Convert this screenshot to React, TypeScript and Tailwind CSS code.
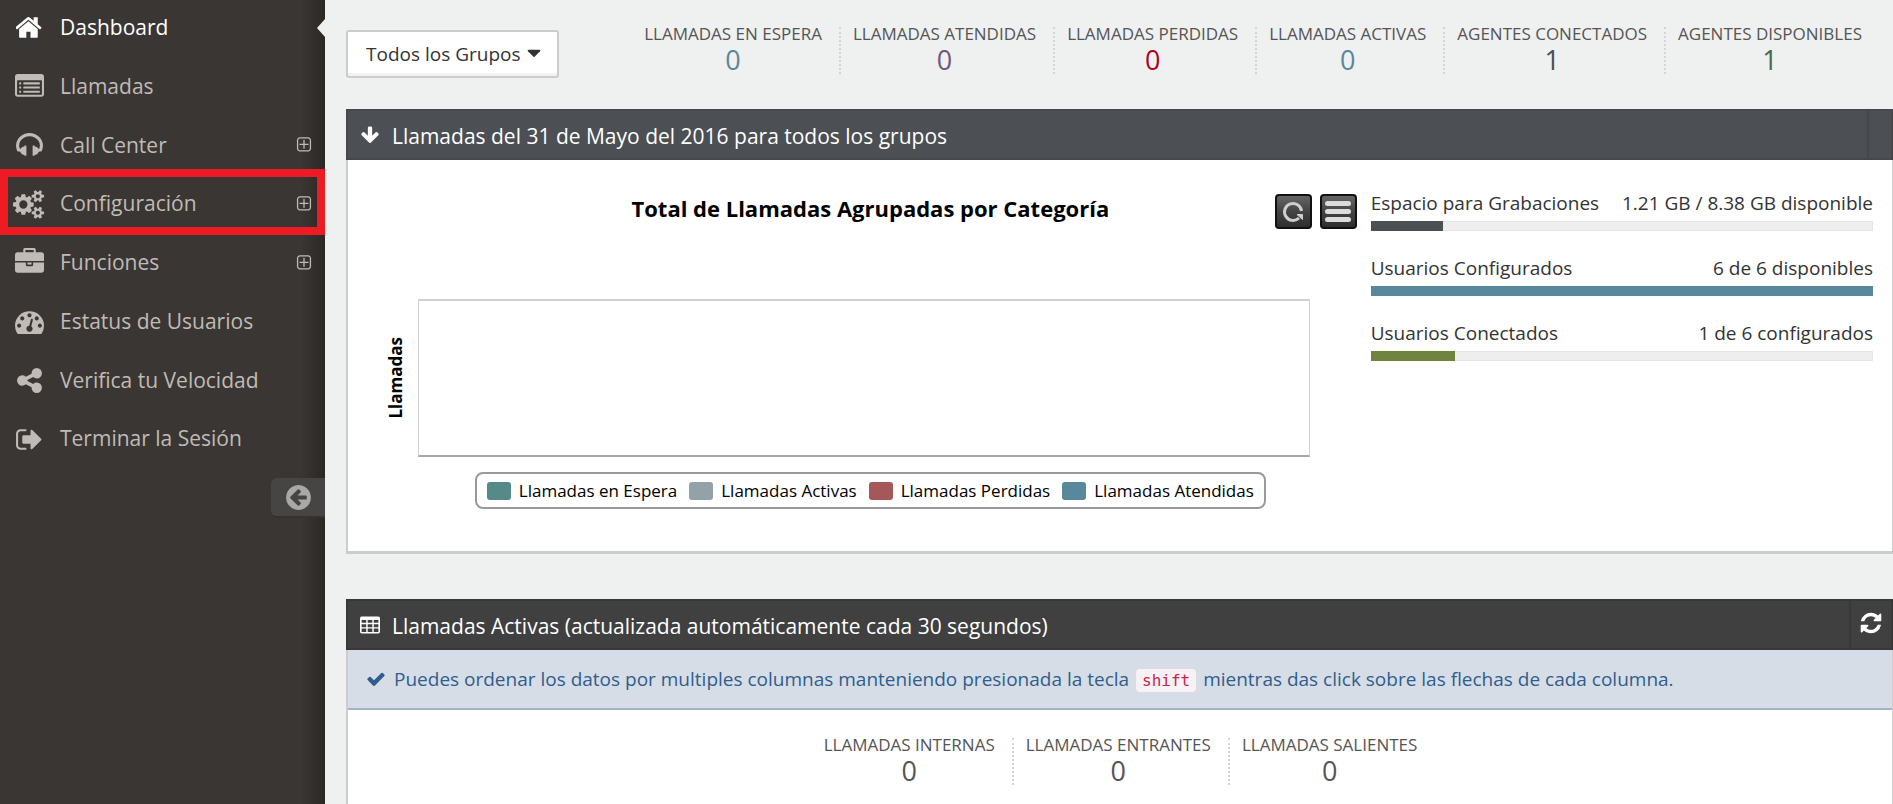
import { useState } from 'react';
import type { ReactNode } from 'react';

interface IconProps {
  d: string;
  className?: string;
  viewBox?: string;
}

interface NavItem {
  label: string;
  icon: string;
  viewBox?: string;
  expandable?: boolean;
  marked?: boolean;
}

interface Stat {
  label: string;
  value: number;
  color: string;
}

const icons = {
  home: 'M1408 992v480q0 26-19 45t-45 19h-384v-384h-256v384h-384q-26 0-45-19t-19-45v-480q0-1 .5-3t.5-3l575-474 575 474q1 2 1 6zm223-69l-62 74q-8 9-21 11h-3q-13 0-21-7l-692-577-692 577q-12 8-24 7-13-2-21-11l-62-74q-8-10-7-23.5t11-21.5l719-599q32-26 76-26t76 26l244 204v-195q0-14 9-23t23-9h192q14 0 23 9t9 23v408l219 182q10 8 11 21.5t-7 23.5z',
  listAlt: 'M384 1184v64q0 13-9.500 22.500t-22.500 9.500h-64q-13 0-22.500-9.500t-9.500-22.500v-64q0-13 9.500-22.500t22.500-9.500h64q13 0 22.500 9.500t9.500 22.500zm0-256v64q0 13-9.500 22.500t-22.500 9.500h-64q-13 0-22.500-9.500t-9.500-22.500v-64q0-13 9.500-22.500t22.500-9.500h64q13 0 22.500 9.500t9.500 22.500zm0-256v64q0 13-9.500 22.500t-22.500 9.500h-64q-13 0-22.500-9.500t-9.500-22.500v-64q0-13 9.500-22.500t22.500-9.500h64q13 0 22.500 9.500t9.500 22.500zm1152 512v64q0 13-9.500 22.500t-22.500 9.500h-960q-13 0-22.500-9.500t-9.500-22.500v-64q0-13 9.500-22.500t22.500-9.500h960q13 0 22.500 9.500t9.500 22.500zm0-256v64q0 13-9.500 22.500t-22.500 9.500h-960q-13 0-22.500-9.500t-9.500-22.500v-64q0-13 9.500-22.500t22.500-9.500h960q13 0 22.500 9.500t9.500 22.500zm0-256v64q0 13-9.500 22.500t-22.500 9.500h-960q-13 0-22.500-9.500t-9.500-22.500v-64q0-13 9.500-22.500t22.500-9.500h960q13 0 22.500 9.500t9.500 22.500zm128 704v-832q0-13-9.500-22.500t-22.500-9.500h-1472q-13 0-22.500 9.500t-9.500 22.500v832q0 13 9.500 22.500t22.500 9.500h1472q13 0 22.500-9.500t9.500-22.500zm128-1088v1088q0 66-47 113t-113 47h-1472q-66 0-113-47t-47-113v-1088q0-66 47-113t113-47h1472q66 0 113 47t47 113z',
  headphones: 'M1728 886q0 166-60 314l-20 49-185 33q-22 83-90.500 136.500t-156.500 53.500v32q0 14-9 23t-23 9h-64q-14 0-23-9t-9-23v-576q0-14 9-23t23-9h64q14 0 23 9t9 23v32q71 0 130 35.500t93 95.500l68-12q29-95 29-193 0-148-88-279t-236.500-209-315.500-78-315.500 78-236.500 209-88 279q0 98 29 193l68 12q34-60 93-95.500t130-35.500v-32q0-14 9-23t23-9h64q14 0 23 9t9 23v576q0 14-9 23t-23 9h-64q-14 0-23-9t-9-23v-32q-88 0-156.500-53.500t-90.500-136.500l-185-33-20-49q-60-148-60-314 0-151 67-291t179-242.500 266-163.500 320-61 320 61 266 163.500 179 242.500 67 291z',
  cogs: 'M896 896q0-106-75-181t-181-75-181 75-75 181 75 181 181 75 181-75 75-181zm768 512q0-52-38-90t-90-38-90 38-38 90q0 53 37.500 90.500t90.500 37.500 90.500-37.500 37.500-90.500zm0-1024q0-52-38-90t-90-38-90 38-38 90q0 53 37.500 90.500t90.500 37.500 90.500-37.500 37.500-90.500zm-384 421v185q0 10-7 19.500t-16 10.500l-155 24q-11 35-32 76 34 48 90 115 7 11 7 20 0 12-7 19-23 30-82.500 89.500t-78.500 59.500q-11 0-21-7l-115-90q-37 19-77 31-11 108-23 155-7 24-30 24h-186q-11 0-20-7.500t-10-17.500l-23-153q-34-10-75-31l-118 89q-7 7-20 7-11 0-21-8-144-133-144-160 0-9 7-19 10-14 41-53t47-61q-23-44-35-82l-152-24q-10-1-17-9.500t-7-19.500v-185q0-10 7-19.500t16-10.500l155-24q11-35 32-76-34-48-90-115-7-11-7-20 0-12 7-20 22-30 82-89t79-59q11 0 21 7l115 90q34-18 77-32 11-108 23-154 7-24 30-24h186q11 0 20 7.500t10 17.500l23 153q34 10 75 31l118-89q8-7 20-7 11 0 21 8 144 133 144 160 0 8-7 19-12 16-42 54t-45 60q23 48 34 82l152 23q10 2 17 10.500t7 19.500zm640 533v140q0 16-149 31-12 27-30 52 51 113 51 138 0 4-4 7-122 71-124 71-8 0-46-47t-52-68q-20 2-30 2t-30-2q-14 21-52 68t-46 47q-2 0-124-71-4-3-4-7 0-25 51-138-18-25-30-52-149-15-149-31v-140q0-16 149-31 13-29 30-52-51-113-51-138 0-4 4-7 4-2 35-20t59-34 30-16q8 0 46 46.500t52 67.500q20-2 30-2t30 2q51-71 92-112l6-2q4 0 124 70 4 3 4 7 0 25-51 138 17 23 30 52 149 15 149 31zm0-1024v140q0 16-149 31-12 27-30 52 51 113 51 138 0 4-4 7-122 71-124 71-8 0-46-47t-52-68q-20 2-30 2t-30-2q-14 21-52 68t-46 47q-2 0-124-71-4-3-4-7 0-25 51-138-18-25-30-52-149-15-149-31v-140q0-16 149-31 13-29 30-52-51-113-51-138 0-4 4-7 4-2 35-20t59-34 30-16q8 0 46 46.500t52 67.500q20-2 30-2t30 2q51-71 92-112l6-2q4 0 124 70 4 3 4 7 0 25-51 138 17 23 30 52 149 15 149 31z',
  briefcase: 'M640 256h512v-128h-512v128zm1152 640v480q0 66-47 113t-113 47h-1472q-66 0-113-47t-47-113v-480h672v160q0 26 19 45t45 19h320q26 0 45-19t19-45v-160h672zm-768 0v128h-256v-128h256zm768-480v384h-1792v-384q0-66 47-113t113-47h352v-160q0-40 28-68t68-28h576q40 0 68 28t28 68v160h352q66 0 113 47t47 113z',
  dashboard: 'M384 1152q0-53-37.500-90.500t-90.500-37.500-90.500 37.500-37.500 90.500 37.500 90.500 90.500 37.500 90.500-37.500 37.500-90.500zm192-448q0-53-37.500-90.500t-90.500-37.500-90.500 37.500-37.500 90.500 37.500 90.500 90.500 37.500 90.500-37.500 37.500-90.500zm428 481l101-382q6-26-7.500-48.500t-38.500-29.500-48 6.500-30 39.500l-101 382q-60 5-107 43.500t-63 98.500q-20 77 20 146t117 89 146-20 89-117q16-60-6-117t-72-91zm660-33q0-53-37.500-90.500t-90.500-37.500-90.500 37.500-37.500 90.500 37.500 90.500 90.500 37.500 90.500-37.500 37.500-90.500zm-640-640q0-53-37.500-90.500t-90.500-37.500-90.500 37.500-37.500 90.500 37.500 90.500 90.500 37.500 90.500-37.500 37.500-90.500zm448 192q0-53-37.500-90.500t-90.500-37.500-90.500 37.500-37.500 90.500 37.500 90.500 90.500 37.500 90.500-37.500 37.500-90.500zm320 448q0 261-141 483-19 29-54 29h-1402q-35 0-54-29-141-221-141-483 0-182 71-348t191-286 286-191 348-71 348 71 286 191 191 286 71 348z',
  share: 'M1344 1024q133 0 226.500 93.500t93.500 226.500-93.500 226.500-226.500 93.500-226.500-93.500-93.500-226.500q0-12 2-34l-360-180q-92 86-218 86-133 0-226.500-93.500t-93.500-226.500 93.500-226.500 226.500-93.500q126 0 218 86l360-180q-2-22-2-34 0-133 93.500-226.500t226.500-93.500 226.500 93.500 93.500 226.500-93.500 226.500-226.500 93.500q-126 0-218-86l-360 180q2 22 2 34t-2 34l360 180q92-86 218-86z',
  signOut: 'M704 1440q0 4 1 20t.5 26.500-3 23.500-10 19.500-20.500 6.500h-320q-119 0-203.500-84.500t-84.500-203.500v-704q0-119 84.500-203.500t203.500-84.500h320q13 0 22.500 9.500t9.500 22.500q0 4 1 20t.5 26.500-3 23.500-10 19.500-20.500 6.500h-320q-66 0-113 47t-47 113v704q0 66 47 113t113 47h312l11.500 1 11.500 3 8 5.500 7 9 2 13.500zm928-544q0 26-19 45l-544 544q-19 19-45 19t-45-19-19-45v-288h-448q-26 0-45-19t-19-45v-384q0-26 19-45t45-19h448v-288q0-26 19-45t45-19 45 19l544 544q19 19 19 45z',
  plusSquare: 'M1344 800v64q0 14-9 23t-23 9h-352v352q0 14-9 23t-23 9h-64q-14 0-23-9t-9-23v-352h-352q-14 0-23-9t-9-23v-64q0-14 9-23t23-9h352v-352q0-14 9-23t23-9h64q14 0 23 9t9 23v352h352q14 0 23 9t9 23zm128 448v-832q0-66-47-113t-113-47h-832q-66 0-113 47t-47 113v832q0 66 47 113t113 47h832q66 0 113-47t47-113zm128-832v832q0 119-84.500 203.500t-203.500 84.500h-832q-119 0-203.500-84.500t-84.500-203.500v-832q0-119 84.500-203.500t203.500-84.500h832q119 0 203.500 84.500t84.500 203.500z',
  arrowCircleLeft: 'M1408 960v-128q0-26-19-45t-45-19h-502l189-189q19-19 19-45t-19-45l-91-91q-18-18-45-18t-45 18l-362 362-91 91q-18 18-18 45t18 45l91 91 362 362q18 18 45 18t45-18l91-91q18-18 18-45t-18-45l-189-189h502q26 0 45-19t19-45zm256-64q0 209-103 385.500t-279.500 279.500-385.500 103-385.500-103-279.500-279.500-103-385.500 103-385.500 279.500-279.500 385.500-103 385.500 103 279.500 279.500 103 385.500z',
  arrowDown: 'M1675 832q0 53-37 90l-651 652q-39 37-91 37-53 0-90-37l-651-652q-38-36-38-90 0-53 38-91l74-75q39-37 91-37 53 0 90 37l294 294v-704q0-52 38-90t90-38h128q52 0 90 38t38 90v704l294-294q37-37 90-37 52 0 91 37l75 75q37 39 37 91z',
  table: 'M160 128h1472q160 0 160 160v1216q0 160-160 160h-1472q-160 0-160-160v-1216q0-160 160-160zM144 448v256h416v-256zM688 448v256h416v-256zM1232 448v256h416v-256zM144 832v256h416v-256zM688 832v256h416v-256zM1232 832v256h416v-256zM144 1216v304h416v-304zM688 1216v304h416v-304zM1232 1216v304h416v-304z',
  refresh: 'M1639 1056q0 5-1 7-64 268-268 434.500t-478 166.500q-146 0-282.500-55t-243.500-157l-129 129q-19 19-45 19t-45-19-19-45v-448q0-26 19-45t45-19h448q26 0 45 19t19 45-19 45l-137 137q71 66 161 102t187 36q134 0 250-65t186-179q11-17 53-117 8-23 30-23h192q13 0 22.500 9.500t9.500 22.500zm25-800v448q0 26-19 45t-45 19h-448q-26 0-45-19t-19-45 19-45l138-138q-148-137-349-137-134 0-250 65t-186 179q-11 17-53 117-8 23-30 23h-199q-13 0-22.500-9.500t-9.500-22.500v-7q65-268 270-434.500t480-166.500q146 0 284 55.500t245 156.500l130-129q19-19 45-19t45 19 19 45z',
  check: 'M1671 566q0 40-28 68l-724 724-136 136q-28 28-68 28t-68-28l-136-136-362-362q-28-28-28-68t28-68l136-136q28-28 68-28t68 28l294 295 656-657q28-28 68-28t68 28l136 136q28 28 28 68z',
  caretDown: 'M1408 704q0 26-19 45l-448 448q-19 19-45 19t-45-19l-448-448q-19-19-19-45t19-45 45-19h896q26 0 45 19t19 45z',
};

const navItems: NavItem[] = [
  { label: 'Dashboard', icon: icons.home, viewBox: '64 0 1664 1792' },
  { label: 'Llamadas', icon: icons.listAlt },
  { label: 'Call Center', icon: icons.headphones, expandable: true },
  { label: 'Configuración', icon: icons.cogs, viewBox: '0 0 1920 1792', expandable: true, marked: true },
  { label: 'Funciones', icon: icons.briefcase, expandable: true },
  { label: 'Estatus de Usuarios', icon: icons.dashboard },
  { label: 'Verifica tu Velocidad', icon: icons.share },
  { label: 'Terminar la Sesión', icon: icons.signOut },
];

const summaryStats: Stat[] = [
  { label: 'LLAMADAS EN ESPERA', value: 0, color: 'text-[#57889c]' },
  { label: 'LLAMADAS ATENDIDAS', value: 0, color: 'text-[#6e587a]' },
  { label: 'LLAMADAS PERDIDAS', value: 0, color: 'text-[#a90329]' },
  { label: 'LLAMADAS ACTIVAS', value: 0, color: 'text-[#57889c]' },
  { label: 'AGENTES CONECTADOS', value: 1, color: 'text-[#4c4f53]' },
  { label: 'AGENTES DISPONIBLES', value: 1, color: 'text-[#496949]' },
];

const activeStats: Stat[] = [
  { label: 'LLAMADAS INTERNAS', value: 0, color: 'text-[#555555]' },
  { label: 'LLAMADAS ENTRANTES', value: 0, color: 'text-[#555555]' },
  { label: 'LLAMADAS SALIENTES', value: 0, color: 'text-[#555555]' },
];

const usage = [
  { label: 'Espacio para Grabaciones', detail: '1.21 GB / 8.38 GB disponible', percent: 14.4, color: 'bg-[#4c4f53]' },
  { label: 'Usuarios Configurados', detail: '6 de 6 disponibles', percent: 100, color: 'bg-[#57889c]' },
  { label: 'Usuarios Conectados', detail: '1 de 6 configurados', percent: 16.7, color: 'bg-[#71843f]' },
];

const legend = [
  { label: 'Llamadas en Espera', color: 'bg-[#568a89]' },
  { label: 'Llamadas Activas', color: 'bg-[#92a2a8]' },
  { label: 'Llamadas Perdidas', color: 'bg-[#a65858]' },
  { label: 'Llamadas Atendidas', color: 'bg-[#57889c]' },
];

function Icon({ d, className, viewBox = '0 0 1792 1792' }: IconProps) {
  return (
    <svg viewBox={viewBox} className={className} fill="currentColor" fillRule="evenodd" aria-hidden="true">
      <path d={d} />
    </svg>
  );
}

function Sidebar() {
  const [active, setActive] = useState('Dashboard');

  return (
    <aside className="w-[325px] shrink-0 bg-[#3a3633] bg-[linear-gradient(to_left,#2a2725,#3a3633_24px)]">
      <nav className="grid h-[470px] auto-rows-fr">
        {navItems.map((item) => (
          <a
            key={item.label}
            href="#"
            onClick={() => setActive(item.label)}
            className={`relative flex items-center pr-3 pb-[3px] text-[21px] ${active === item.label ? 'text-white' : 'text-[#c0bbb7]'}`}
          >
            <span className="mr-0.5 flex w-[58px] justify-center">
              <Icon d={item.icon} viewBox={item.viewBox} className="h-[29px]" />
            </span>
            <span className="flex-1">{item.label}</span>
            {item.expandable && <Icon d={icons.plusSquare} className="size-[18px]" />}
            {active === item.label && (
              <svg viewBox="0 0 8 18" className="absolute top-[19px] right-0 h-[18px] w-2 fill-[#eff0f0]">
                <path d="M8 0v18L0 9z" />
              </svg>
            )}
            {item.marked && <span className="absolute inset-x-0 -top-[7px] bottom-0 border-8 border-[#ed1c24]" />}
          </a>
        ))}
      </nav>
      <div className="flex justify-end pt-2">
        <button
          type="button"
          aria-label="Minimizar menú"
          className="flex h-10 w-[54px] items-center justify-center rounded-l-md border-b-2 border-[#333] bg-[#474544] text-[#a8a8a8]"
        >
          <Icon d={icons.arrowCircleLeft} className="size-[29px]" />
        </button>
      </div>
    </aside>
  );
}

function StatList({ stats }: { stats: Stat[] }) {
  return (
    <ul className="flex">
      {stats.map((stat, i) => (
        <li
          key={stat.label}
          className={`h-[47px] pr-[17px] text-center ${i > 0 ? 'border-l-2 border-dotted border-[#d5d5d5] pl-3' : ''}`}
        >
          <p className="text-[17px] leading-[14px] whitespace-nowrap text-[#555]">{stat.label}</p>
          <p className={`text-[27px] leading-[38px] ${stat.color}`}>{stat.value}</p>
        </li>
      ))}
    </ul>
  );
}

function PanelHeader({ icon, title, dark, children }: { icon: string; title: string; dark?: boolean; children?: ReactNode }) {
  return (
    <header
      className={`flex h-[51px] items-stretch border-2 text-white ${dark ? 'border-[#383838] bg-[#404040]' : 'border-[#45474b] bg-[#4c4f53]'}`}
    >
      <Icon d={icon} className="mr-3 ml-3 size-5 self-center" />
      <h2 className="flex-1 self-center pt-1 text-[21px]">{title}</h2>
      {children}
    </header>
  );
}

function CallsChart() {
  return (
    <figure className="pl-9">
      <div className="grid grid-cols-[1fr_auto_1fr]">
        <figcaption className="col-start-2 text-[22px] leading-7 font-bold text-black">
          Total de Llamadas Agrupadas por Categoría
        </figcaption>
        <div className="flex justify-end gap-2">
          <button
            type="button"
            aria-label="Recargar"
            className="flex h-[35px] w-[37px] items-center justify-center rounded border-2 border-[#111] bg-gradient-to-b from-[#666] via-[#444] to-[#2e2e2e]"
          >
            <svg viewBox="0 0 24 24" className="size-6" fill="none" stroke="#cfcfcf" strokeWidth="3">
              <path d="M20.500 11A8.500 8.500 0 1 0 18 18" />
              <path d="M16 14.500h5.500v5z" strokeWidth="1" fill="#cfcfcf" />
            </svg>
          </button>
          <button
            type="button"
            aria-label="Opciones"
            className="flex h-[35px] w-[37px] flex-col items-center justify-center gap-[3px] rounded border-2 border-[#111] bg-gradient-to-b from-[#666] via-[#444] to-[#2e2e2e]"
          >
            <span className="h-[5px] w-[26px] rounded-sm bg-[#dcdcdc]" />
            <span className="h-[5px] w-[26px] rounded-sm bg-[#dcdcdc]" />
            <span className="h-[5px] w-[26px] rounded-sm bg-[#dcdcdc]" />
          </button>
        </div>
      </div>
      <div className="mt-[70px] mr-[47px] flex h-[158px]">
        <div className="flex w-[34px] items-center">
          <span className="rotate-180 text-[17px] leading-6 font-bold text-black [writing-mode:vertical-rl]">
            Llamadas
          </span>
        </div>
        <div className="flex-1 border border-t-2 border-b-2 border-[#d0d0d0] border-b-[#a8a8a8]" />
      </div>
      <ul className="mx-auto mt-[15px] flex h-[37px] w-fit items-center gap-3 rounded-lg border-2 border-[#999] px-[10px] text-[17px] text-black">
        {legend.map((entry) => (
          <li key={entry.label} className="flex items-center gap-2">
            <span className={`h-[18px] w-6 rounded-[3px] ${entry.color}`} />
            {entry.label}
          </li>
        ))}
      </ul>
    </figure>
  );
}

function UsageBars() {
  return (
    <div className="flex flex-col gap-6">
      {usage.map((item) => (
        <div key={item.label}>
          <p className="mb-[5px] flex justify-between text-[19px] leading-[26px] whitespace-nowrap">
            <span>{item.label}</span>
            <span>{item.detail}</span>
          </p>
          <div className="h-[10px] bg-[#eee] inset-ring inset-ring-[#e5e5e5]">
            <div className={`h-full ${item.color}`} style={{ width: `${item.percent}%` }} />
          </div>
        </div>
      ))}
    </div>
  );
}

export default function App() {
  return (
    <div className="flex min-h-screen bg-[#eff0f0] font-['Open_Sans',sans-serif] text-[#333]">
      <Sidebar />
      <main className="flex min-w-0 flex-1 flex-col pl-[21px]">
        <div className="flex h-[109px] items-start justify-between pr-3.5">
          <div className="relative mt-[30px]">
            <select
              aria-label="Grupo"
              className="h-12 w-[213px] appearance-none rounded-[3px] border-2 border-[#ccc] bg-white pl-[18px] text-[19px] shadow-[inset_0_-3px_0_#f2f2f2]"
            >
              <option>Todos los Grupos</option>
            </select>
            <Icon d={icons.caretDown} className="pointer-events-none absolute top-3 right-[14px] size-[22px]" />
          </div>
          <div className="mt-[27px]">
            <StatList stats={summaryStats} />
          </div>
        </div>

        <section>
          <PanelHeader icon={icons.arrowDown} title="Llamadas del 31 de Mayo del 2016 para todos los grupos">
            <span className="w-6 border-l-2 border-[#45474b]" />
          </PanelHeader>
          <div className="grid h-[394px] grid-cols-[2fr_1fr] gap-3 border-r border-b-3 border-l-2 border-[#ccc] bg-white pr-[19px]">
            <div className="pt-[34px]">
              <CallsChart />
            </div>
            <div className="pt-[30px] pl-0.5">
              <UsageBars />
            </div>
          </div>
        </section>

        <section className="mt-[45px] flex flex-1 flex-col">
          <PanelHeader icon={icons.table} title="Llamadas Activas (actualizada automáticamente cada 30 segundos)" dark>
            <button
              type="button"
              aria-label="Actualizar"
              className="flex w-[42px] items-center justify-center border-l-2 border-[#383838] pb-1"
            >
              <Icon d={icons.refresh} className="size-6" />
            </button>
          </PanelHeader>
          <div className="flex-1 border-r border-l-2 border-[#ccc] bg-white">
            <p className="flex h-[60px] items-center border-b-2 border-[#9eb4c7] bg-[#d6dde7] pl-[18px] text-[19px] text-[#305d8c]">
              <Icon d={icons.check} className="mr-2 size-5 shrink-0" />
              <span>
                Puedes ordenar los datos por multiples columnas manteniendo presionada la tecla{' '}
                <code className="mx-0.5 rounded bg-[#f9f2f4] px-1.5 py-0.5 font-['DejaVu_Sans_Mono',monospace] text-base text-[#c7254e]">
                  shift
                </code>{' '}
                mientras das click sobre las flechas de cada columna.
              </span>
            </p>
            <div className="mt-7 flex justify-center pl-[18px]">
              <StatList stats={activeStats} />
            </div>
          </div>
        </section>
      </main>
    </div>
  );
}
